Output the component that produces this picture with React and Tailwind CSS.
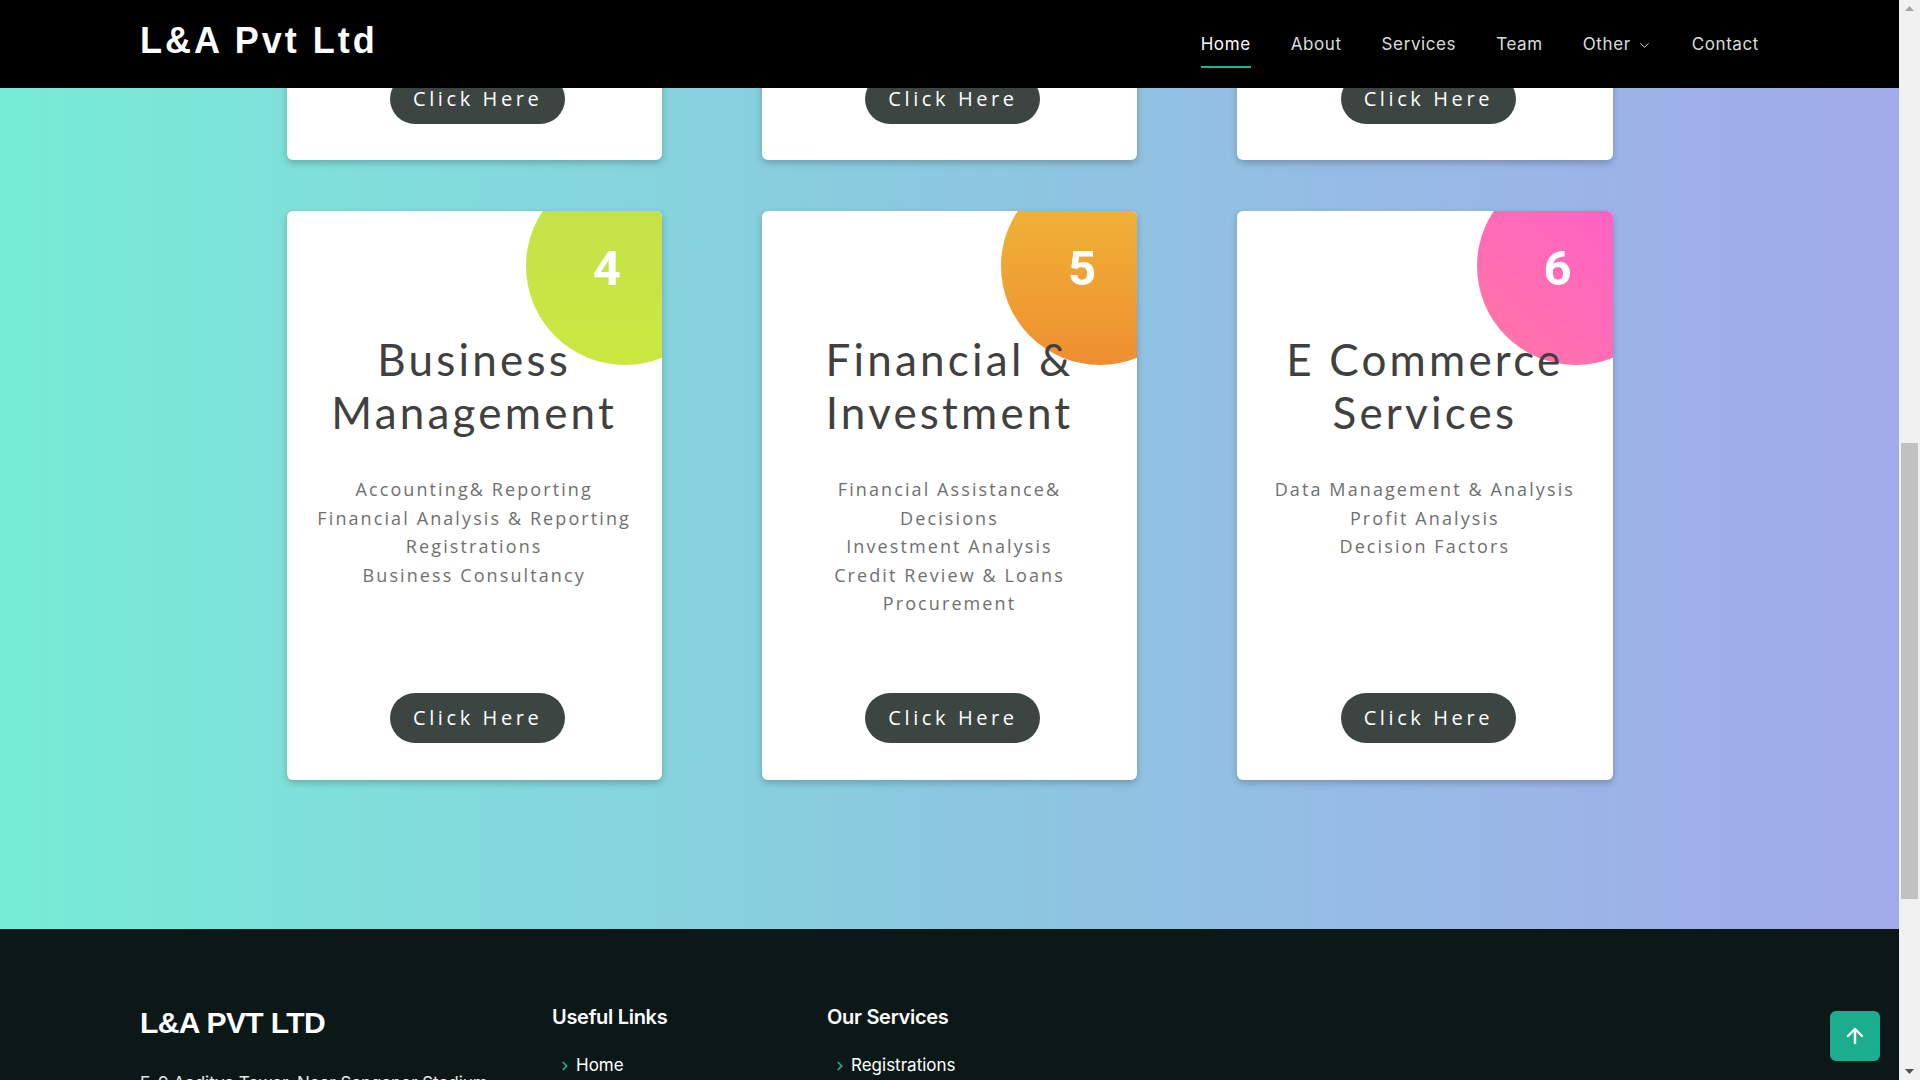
import React from 'react';
import { ArrowUp, ChevronDown, ChevronRight } from 'lucide-react';

const topCards = [1, 2, 3];

const services = [
  {
    num: '4',
    circle: 'bg-linear-to-b from-[#c2e04b] to-[#cbe840]',
    title: ['Business', 'Management'],
    lines: ['Accounting& Reporting', 'Financial Analysis & Reporting', 'Registrations', 'Business Consultancy'],
  },
  {
    num: '5',
    circle: 'bg-linear-to-b from-[#efba38] to-[#ee8f31]',
    title: ['Financial &', 'Investment'],
    lines: ['Financial Assistance&', 'Decisions', 'Investment Analysis', 'Credit Review & Loans', 'Procurement'],
  },
  {
    num: '6',
    circle: 'bg-linear-to-bl from-[#ff58d0] to-[#ff76a4]',
    title: ['E Commerce', 'Services'],
    lines: ['Data Management & Analysis', 'Profit Analysis', 'Decision Factors'],
  },
];

const navLinks = ['Home', 'About', 'Services', 'Team', 'Other', 'Contact'];

function ClickButton() {
  return (
    <button className="mt-auto ml-[7px] w-[175px] h-[50px] rounded-full bg-[#3d4543] text-white text-[20px] font-medium tracking-[3.6px] font-['Open_Sans',sans-serif]">
      Click Here
    </button>
  );
}

export default function App() {
  return (
    <div className="flex h-[1080px] w-[1920px] overflow-hidden">
      {/* Page viewport */}
      <div className="relative w-[1899px] h-full overflow-hidden">
        {/* Header (fixed) */}
        <header className="absolute top-0 inset-x-0 z-20 h-[88px] bg-black flex items-center justify-between px-[140px]">
          <div className="-mt-[6px] text-[36px] font-bold tracking-[3px] text-white font-['Liberation_Sans',sans-serif]">
            L&amp;A Pvt Ltd
          </div>
          <nav className="flex items-center gap-[40px] font-['Inter',sans-serif] text-[17px] tracking-[0.6px]">
            {navLinks.map((link) => (
              <a
                key={link}
                className={
                  'relative flex items-center gap-[6px] py-[10px] mt-[2px] ' +
                  (link === 'Home' ? 'text-white' : 'text-[#dcdcdc]')
                }
              >
                {link}
                {link === 'Other' && <ChevronDown size={15} strokeWidth={1.6} />}
                {link === 'Home' && (
                  <span className="absolute left-0 right-0 bottom-[0px] h-[2px] bg-[#1fb394]" />
                )}
              </a>
            ))}
          </nav>
        </header>

        {/* Scrolled content */}
        <div className="-mt-[409px]">
          <section className="bg-linear-to-r from-[#76ecd6] via-[#8bc8e0] to-[#a1aaea] pb-[149px]">
            <div className="mx-auto w-[1326px] grid grid-cols-3 gap-x-[100px] gap-y-[51px]">
              {topCards.map((c) => (
                <div
                  key={c}
                  className="h-[569px] bg-white rounded-md shadow-[0_3px_7px_rgba(0,0,0,0.22)] flex flex-col items-center pb-[36px]"
                >
                  <ClickButton />
                </div>
              ))}
              {services.map((s) => (
                <div
                  key={s.num}
                  className="relative overflow-hidden h-[569px] bg-white rounded-md shadow-[0_3px_7px_rgba(0,0,0,0.22)] flex flex-col items-center pt-[122px] pb-[37px] px-[10px]"
                >
                  <div className={'absolute top-[-44px] right-[-62px] w-[198px] h-[198px] rounded-full ' + s.circle} />
                  <div className="absolute top-[33px] right-[41px] text-[49px] leading-none font-bold text-white font-['Roboto',sans-serif]">
                    {s.num}
                  </div>
                  <h3 className="relative text-center text-[44px] leading-[53px] text-[#404040] tracking-[3.2px] font-['Lato',sans-serif]">
                    {s.title[0]}
                    <br />
                    {s.title[1]}
                  </h3>
                  <div className="mt-[36px] text-center text-[18px] leading-[28.5px] tracking-[2.1px] text-[#6f6f6f] font-['Open_Sans',sans-serif]">
                    {s.lines.map((l) => (
                      <p key={l}>{l}</p>
                    ))}
                  </div>
                  <ClickButton />
                </div>
              ))}
            </div>
          </section>

          {/* Footer */}
          <footer className="bg-[#0c1818] px-[140px] pt-[70px] pb-[40px] text-white">
            <div className="grid grid-cols-[412px_275px_1fr]">
              <div>
                <h3 className="mt-[6px] text-[30px] leading-[36px] font-bold tracking-[-0.6px] font-['Liberation_Sans',sans-serif]">
                  L&amp;A PVT LTD
                </h3>
                <p className="mt-[30px] text-[17px] text-[#e8e8e8] font-['Inter',sans-serif]">
                  E-9 Aaditya Tower, Near Sanganer Stadium
                </p>
              </div>
              <div className="mt-[4px] font-['Inter',sans-serif]">
                <h4 className="text-[20px] leading-[28px] font-semibold tracking-[-0.3px]">Useful Links</h4>
                <ul className="mt-[22px] text-[17px]">
                  <li className="flex items-center gap-[4px]">
                    <ChevronRight size={14} strokeWidth={3} className="text-[#1fb394] ml-[6px]" />
                    Home
                  </li>
                </ul>
              </div>
              <div className="mt-[4px] font-['Inter',sans-serif]">
                <h4 className="text-[20px] leading-[28px] font-semibold tracking-[-0.3px]">Our Services</h4>
                <ul className="mt-[22px] text-[17px]">
                  <li className="flex items-center gap-[4px]">
                    <ChevronRight size={14} strokeWidth={3} className="text-[#1fb394] ml-[6px]" />
                    Registrations
                  </li>
                </ul>
              </div>
            </div>
          </footer>
        </div>

        {/* Back to top */}
        <a className="absolute right-[19px] bottom-[19px] z-20 w-[50px] h-[50px] rounded-md bg-[#1aae8f] flex items-center justify-center text-white">
          <ArrowUp size={24} strokeWidth={2.4} />
        </a>
      </div>

      {/* Browser scrollbar */}
      <div className="w-[21px] h-full bg-[#f1f1f1] flex flex-col items-center">
        <div className="h-[17px] flex items-center justify-center">
          <svg width="9" height="5" viewBox="0 0 9 5"><path d="M0 5L4.5 0L9 5Z" fill="#a3a3a3" /></svg>
        </div>
        <div className="flex-1 w-full flex flex-col items-center">
          <div className="mt-[426px] w-[17px] h-[456px] bg-[#c1c1c1]" />
        </div>
        <div className="h-[17px] flex items-center justify-center">
          <svg width="9" height="5" viewBox="0 0 9 5"><path d="M0 0L4.5 5L9 0Z" fill="#505050" /></svg>
        </div>
      </div>
    </div>
  );
}
